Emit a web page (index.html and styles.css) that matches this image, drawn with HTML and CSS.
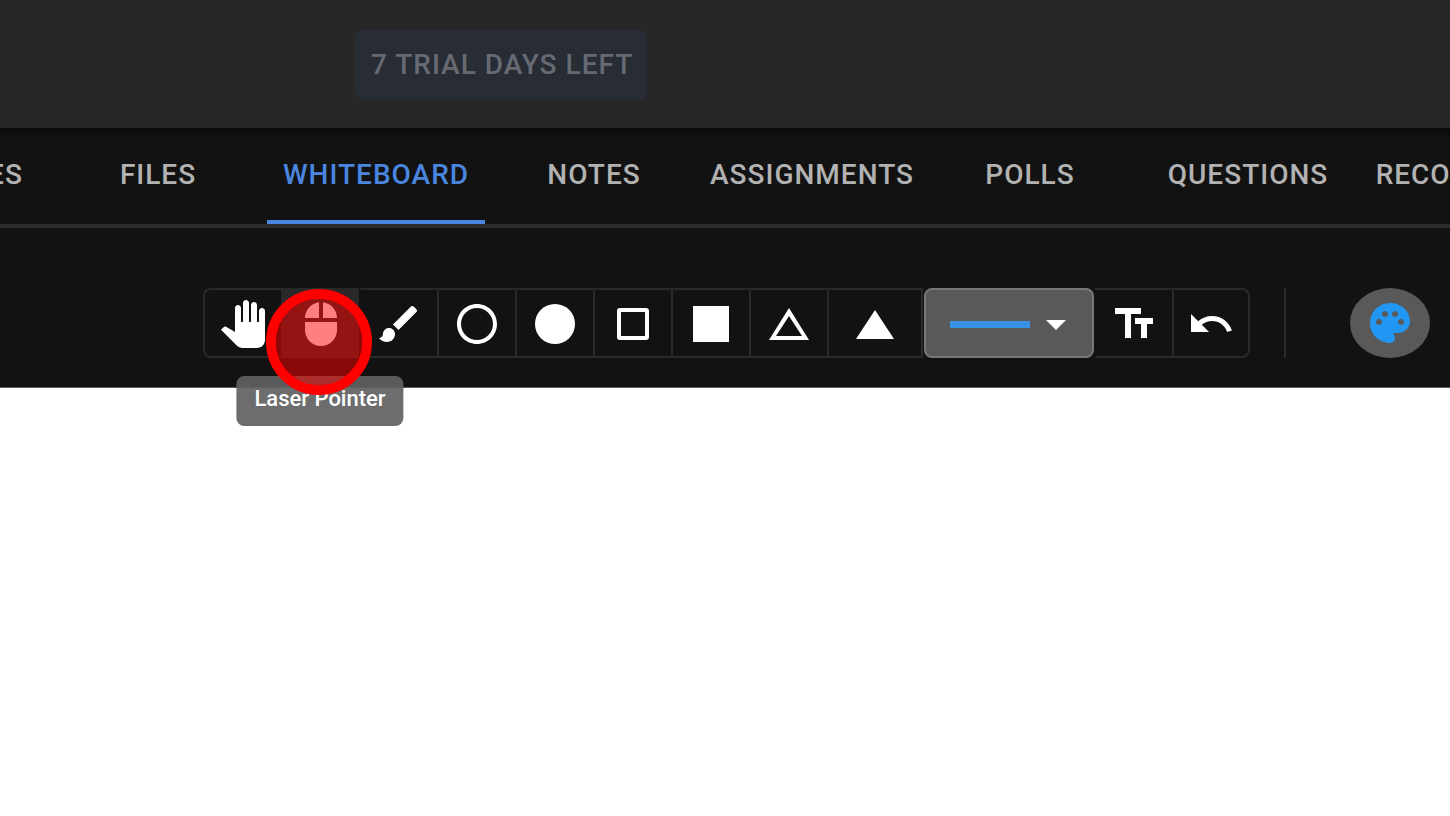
FILE: index.html
```html
<!DOCTYPE html>

<html lang="en">
    <head>
        <meta charset="UTF-8">
        <title>Whiteboard</title>

        <link rel="stylesheet" href="styles.css">
    </head>

    <body>
        <div class="container">
            <header class="header">
                <button class="trial">7 TRIAL DAYS LEFT</button>
            </header>

            <nav class="tabs">
                <a class="tab" href="#resources">RESOURCES</a>
                <a class="tab" href="#files">FILES</a>
                <a class="tab active" href="#whiteboard">WHITEBOARD</a>
                <a class="tab" href="#notes">NOTES</a>
                <a class="tab" href="#assignments">ASSIGNMENTS</a>
                <a class="tab" href="#polls">POLLS</a>
                <a class="tab" href="#questions">QUESTIONS</a>
                <a class="tab" href="#recordings">RECORDINGS</a>
            </nav>

            <div class="toolbar">
                <div class="tools">
                    <button class="tool first" aria-label="Pan">
                        <svg class="icon" viewBox="0 0 24 24"><path d="M23 5.5V20c0 2.2-1.8 4-4 4h-7.3c-1.08 0-2.1-.43-2.85-1.19L1 14.83s1.26-1.23 1.3-1.25c.22-.19.49-.29.79-.29.22 0 .42.06.6.16.04.01 4.31 2.46 4.31 2.46V4c0-.83.67-1.5 1.5-1.5S11 3.17 11 4v7h1V1.5c0-.83.67-1.5 1.5-1.5S15 .67 15 1.5V11h1V2.5c0-.83.67-1.5 1.5-1.5s1.5.67 1.5 1.5V11h1V5.5c0-.83.67-1.5 1.5-1.5s1.5.67 1.5 1.5z"/></svg>
                    </button>
                    <div class="laser">
                        <button class="tool hovered" aria-labelledby="laserTip">
                            <svg class="icon" viewBox="0 0 24 24"><path d="M13 1.07V9h7c0-4.08-3.05-7.44-7-7.93zM4 15c0 4.42 3.58 8 8 8s8-3.58 8-8v-4H4v4zm7-13.93C7.05 1.56 4 4.92 4 9h7V1.07z"/></svg>
                        </button>
                        <span class="tooltip" id="laserTip" role="tooltip">Laser Pointer</span>
                        <span class="marker"></span>
                    </div>
                    <button class="tool borderless" aria-label="Brush">
                        <svg class="icon" viewBox="0 0 24 24"><path d="M7 14c-1.66 0-3 1.34-3 3 0 1.31-1.16 2-2 2 .92 1.22 2.49 2 4 2 2.21 0 4-1.79 4-4 0-1.66-1.34-3-3-3zm13.71-9.37-1.34-1.34a1 1 0 0 0-1.41 0L9 12.25 11.75 15l8.96-8.96c.39-.39.39-1.02 0-1.41z"/></svg>
                    </button>
                    <button class="tool" aria-label="Circle">
                        <svg class="icon" viewBox="0 0 24 24"><path d="M12 2C6.47 2 2 6.47 2 12s4.47 10 10 10 10-4.47 10-10S17.53 2 12 2zm0 18c-4.41 0-8-3.59-8-8s3.59-8 8-8 8 3.59 8 8-3.59 8-8 8z"/></svg>
                    </button>
                    <button class="tool" aria-label="Filled circle">
                        <svg class="icon" viewBox="0 0 24 24"><circle cx="12" cy="12" r="10"/></svg>
                    </button>
                    <button class="tool" aria-label="Square">
                        <svg class="icon" viewBox="0 0 48 48"><rect class="outline" x="10" y="10" width="28" height="28" rx="1"/></svg>
                    </button>
                    <button class="tool" aria-label="Filled square">
                        <svg class="icon" viewBox="0 0 48 48"><rect x="6" y="6" width="36" height="36"/></svg>
                    </button>
                    <button class="tool" aria-label="Triangle">
                        <svg class="icon" viewBox="0 0 48 48"><path d="M24 8L44 40H4zM24 16L11 36H37z" fill-rule="evenodd"/></svg>
                    </button>
                    <button class="tool wide" aria-label="Filled triangle">
                        <svg class="icon" viewBox="0 0 48 48"><path d="M24 10L43 39H5z"/></svg>
                    </button>
                    <button class="tool line-style" aria-label="Line width and colour">
                        <span class="line"></span>
                        <svg class="icon" viewBox="0 0 24 24"><path d="M7 10l5 5 5-5z"/></svg>
                    </button>
                    <button class="tool borderless" aria-label="Text">
                        <svg class="icon" viewBox="0 0 24 24"><path d="M2.5 4v3h5v12h3V7h5V4h-13zm19 5h-9v3h3v7h3v-7h3V9z"/></svg>
                    </button>
                    <button class="tool last" aria-label="Undo">
                        <svg class="icon" viewBox="0 0 24 24"><path d="M12.5 8c-2.65 0-5.05.99-6.9 2.6L2 7v9h9l-3.62-3.62c1.39-1.16 3.16-1.88 5.12-1.88 3.54 0 6.55 2.31 7.6 5.5l2.37-.78C21.08 11.03 17.15 8 12.5 8z"/></svg>
                    </button>
                </div>

                <div class="divider"></div>

                <button class="palette" aria-label="Colour">
                    <svg class="icon" viewBox="0 0 24 24"><path d="M12 2C6.49 2 2 6.49 2 12s4.49 10 10 10c1.38 0 2.5-1.12 2.5-2.5 0-.61-.23-1.2-.64-1.67-.08-.1-.13-.21-.13-.33 0-.28.22-.5.5-.5H16c3.31 0 6-2.69 6-6 0-4.96-4.49-9-10-9zm5.5 11c-.83 0-1.5-.67-1.5-1.5s.67-1.5 1.5-1.5 1.5.67 1.5 1.5-.67 1.5-1.5 1.5zm-3-4c-.83 0-1.5-.67-1.5-1.5S13.67 6 14.5 6s1.5.67 1.5 1.5S15.33 9 14.5 9zM5 11.5c0-.83.67-1.5 1.5-1.5s1.5.67 1.5 1.5S7.33 13 6.5 13 5 12.33 5 11.5zm6-4c0 .83-.67 1.5-1.5 1.5S8 8.33 8 7.5 8.67 6 9.5 6s1.5.67 1.5 1.5z"/></svg>
                </button>
            </div>

            <main class="board"></main>
        </div>
    </body>
</html>
```

FILE: styles.css
```css
* {
    margin: 0;
    padding: 0;
    box-sizing: border-box;
}

html, body {
    width: 100%;
    height: 100%;
    font-family: Roboto, sans-serif;
}

button {
    font: inherit;
    border: none;
    cursor: pointer;
}

.container {
    display: flex;
    flex-direction: column;
    height: 100%;
    overflow: hidden;
}

.header {
    padding: 30px 355px 28px;
    background-color: #272727;
}

.trial {
    padding: 0 14px 0 16px;
    border-radius: 8px;
    background-color: #282c35;
    color: #676a72;
    font-size: 28px;
    font-weight: 500;
    line-height: 70px;
    letter-spacing: 1px;
    white-space: nowrap;
}

/* the strip is scrolled, so the first tab is partly cut off */
.tabs {
    display: flex;
    padding-top: 2px;
    border-bottom: 4px solid #2b2b2b;
    background-color: #121212;
    box-shadow: inset 0 8px 6px -4px #090909;
}

.tab {
    flex: none;
    width: 218px;
    border-bottom: 4px solid transparent;
    color: #b2b2b2;
    font-size: 28px;
    font-weight: 500;
    line-height: 90px;
    letter-spacing: 1px;
    text-align: center;
    text-decoration: none;
}

.tab:first-child {
    margin-left: -169px;
}

.tab.active {
    border-color: #4a86e0;
    color: #4a86e0;
}

.toolbar {
    display: flex;
    align-items: center;
    padding: 60px 20px 29px 203px;
    border-bottom: 1px solid #5a5a5a;
    background-color: #121212;
}

.tools {
    display: flex;
}

.tool {
    display: flex;
    flex: none;
    align-items: center;
    justify-content: center;
    width: 78px;
    height: 70px;
    padding-top: 2px;
    border: 2px solid #292929;
    border-right-width: 0;
    background-color: transparent;
}

.tool.first {
    border-radius: 8px 0 0 8px;
}

.tool.last {
    border-right-width: 2px;
    border-radius: 0 8px 8px 0;
}

.tool.hovered {
    background-color: #292929;
}

.tool.borderless {
    border-left-color: transparent;
}

.tool.wide {
    width: 96px;
    border-right-width: 2px;
}

.icon {
    flex: none;
    width: 48px;
    height: 48px;
    fill: #fff;
}

.outline {
    fill: none;
    stroke: #fff;
    stroke-width: 4;
}

.laser {
    position: relative;
}

.tooltip {
    position: absolute;
    top: 88px;
    left: 50%;
    padding: 0 18px 4px;
    border-radius: 8px;
    background-color: rgba(97, 97, 97, 0.92);
    color: #fff;
    font-size: 22px;
    font-weight: 500;
    line-height: 46px;
    white-space: nowrap;
    transform: translateX(-50%);
}

/* click marker over the hovered tool */
.marker {
    position: absolute;
    top: 1px;
    left: -15px;
    width: 106px;
    height: 106px;
    border: 10px solid #f00;
    border-radius: 50%;
    background-color: rgba(255, 0, 0, 0.5);
    background-clip: padding-box;
}

.tool.line-style {
    width: 170px;
    margin-left: 1px;
    gap: 2px;
    padding-left: 12px;
    border: 2px solid #777;
    border-radius: 8px;
    background-color: #595959;
}

.line {
    width: 80px;
    height: 7px;
    background-color: #3a92e4;
}

.divider {
    width: 2px;
    height: 70px;
    margin: 0 64px 0 34px;
    background-color: #292929;
}

.palette {
    display: flex;
    flex: none;
    align-items: center;
    justify-content: center;
    width: 80px;
    height: 70px;
    border-radius: 50%;
    background-color: #595959;
}

.palette .icon {
    fill: #2196f3;
}

.board {
    flex: 1;
    background-color: #fff;
}
```
